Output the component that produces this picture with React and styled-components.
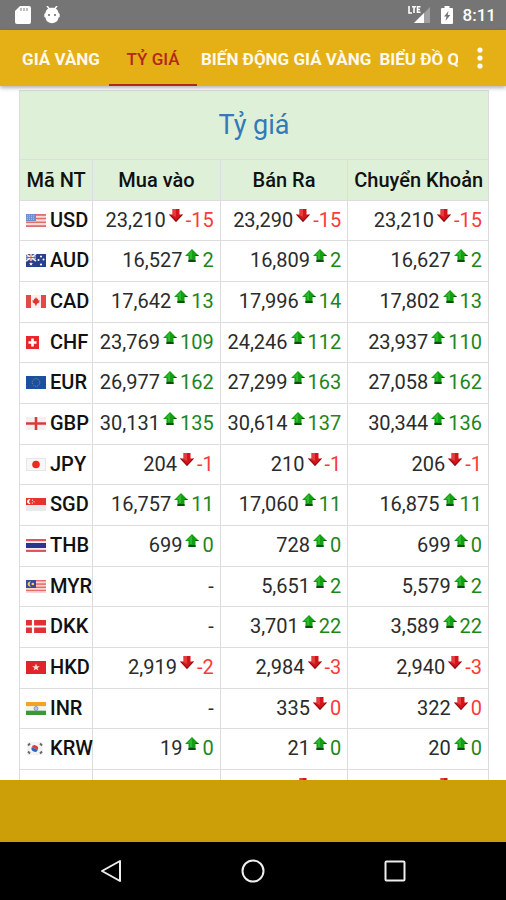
import React from 'react';
import styled, { createGlobalStyle } from 'styled-components';

const theme = {
  gold: '#e4b016',
  goldDark: '#cc9f08',
  status: '#757575',
  active: '#b3261a',
  header: '#dff0d8',
  border: '#dddddd',
  link: '#337ab7',
  up: '#1c861c',
  down: '#fb3a3a',
};

const GlobalStyle = createGlobalStyle`
  * {
    box-sizing: border-box;
  }

  body {
    margin: 0;
    background: #fff;
    color: #2b2b2b;
    font-family: Roboto, "Liberation Sans", sans-serif;
  }

  button {
    border: 0;
    padding: 0;
    background: none;
    color: inherit;
    font: inherit;
  }
`;

const Screen = styled.div`
  height: 100vh;
  display: flex;
  flex-direction: column;
`;

const StatusBar = styled.div`
  flex: none;
  height: 30px;
  padding: 0 10px 0 14px;
  display: flex;
  align-items: center;
  justify-content: space-between;
  background: ${theme.status};
  color: #fff;
  font-size: 17px;
  font-weight: 500;
`;

const StatusGroup = styled.div`
  display: flex;
  align-items: center;
  gap: ${(props) => props.$gap};

  svg {
    display: block;
  }
`;

const TopBar = styled.header`
  flex: none;
  height: 56px;
  position: relative;
  display: flex;
  background: ${theme.gold};
  box-shadow: 0 2px 4px rgba(0, 0, 0, 0.3);
`;

const Tabs = styled.nav`
  flex: 1;
  min-width: 0;
  padding-left: 17px;
  display: flex;
  gap: 4px;
  overflow: hidden;
`;

const Tab = styled.button`
  flex: none;
  min-width: 88px;
  padding-top: 4px;
  border-bottom: 2px solid ${(props) => (props.$active ? theme.active : 'transparent')};
  color: ${(props) => (props.$active ? theme.active : '#fff8ec')};
  font-size: 17px;
  font-weight: ${(props) => (props.$active ? 500 : 700)};
  white-space: nowrap;
`;

const MenuButton = styled.button`
  flex: none;
  width: 48px;
  padding-right: 4px;
  display: flex;
  align-items: center;
  justify-content: center;
  color: #fff;
`;

const Content = styled.main`
  flex: 1;
  min-height: 0;
  overflow-y: auto;
  scrollbar-width: none;
  padding: 4px 17px 0 19px;
`;

const Table = styled.table`
  width: 100%;
  table-layout: fixed;
  border-collapse: collapse;
  font-size: 20px;
  line-height: 24px;

  th,
  td {
    padding: 0 6px;
    border: 1px solid ${theme.border};
    white-space: nowrap;
  }

  tbody th,
  tbody td {
    padding-bottom: 2px;
  }

  tbody tr {
    height: 41px;
  }

  tbody tr:nth-child(3n + 1) {
    height: 40px;
  }
`;

const Column = styled.col`
  width: ${(props) => props.$width};
`;

const Title = styled.th`
  height: 69px;
  background: ${theme.header};
  color: ${theme.link};
  font-size: 27px;
  font-weight: 400;
`;

const Heading = styled.th`
  height: 41px;
  background: ${theme.header};
  color: #111;
  font-weight: 500;
`;

const Code = styled.th`
  color: #111;
  font-weight: 500;
  text-align: left;

  svg {
    margin-right: 4px;
  }
`;

const Rate = styled.td`
  text-align: right;

  svg {
    margin: 0 3px;
  }
`;

const Change = styled.span`
  color: ${(props) => (props.$down ? theme.down : theme.up)};
`;

const Banner = styled.div`
  flex: none;
  height: 62px;
  background: ${theme.goldDark};
`;

const NavBar = styled.nav`
  flex: none;
  height: 58px;
  padding: 0 40px;
  display: grid;
  grid-template-columns: repeat(3, 1fr);
  background: #000;

  button {
    display: flex;
    align-items: center;
    justify-content: center;
  }
`;

function Stripes({ colors }) {
  const h = 13 / colors.length;
  return colors.map((color, i) => <rect key={i} y={i * h} width="20" height={h + 0.1} fill={color} />);
}

const star = 'M0-3 .8-1 2.9-.9 1.2.4 1.8 2.4 0 1.2-1.8 2.4-1.2.4-2.9-.9-.8-1z';

const flags = {
  USD: (
    <>
      <Stripes colors={['#e0706c', '#f7dcdc', '#e0706c', '#f7dcdc', '#e0706c', '#f7dcdc', '#e0706c']} />
      <rect width="10" height="7" fill="#6d8fcb" />
      <path d="M1 1.8h8M1 3.6h8M1 5.4h8" stroke="#b9cbea" strokeWidth=".8" strokeDasharray="1 1" />
    </>
  ),
  AUD: (
    <>
      <rect width="20" height="13" fill="#27408b" />
      <path d="M0 0l10 7M10 0L0 7" stroke="#e8e4f0" strokeWidth="1.6" />
      <path d="M5 0v7M0 3.5h10" stroke="#fff" strokeWidth="2.2" />
      <path d="M5 0v7M0 3.5h10" stroke="#d84a55" strokeWidth="1" />
      <g fill="#fff">
        <path d={star} transform="translate(5 10) scale(.7)" />
        <circle cx="15" cy="2.5" r="1" />
        <circle cx="12.5" cy="6" r="1" />
        <circle cx="17.5" cy="5.5" r="1" />
        <circle cx="15" cy="10.5" r="1.1" />
      </g>
    </>
  ),
  CAD: (
    <>
      <rect width="20" height="13" fill="#fbeeee" />
      <path d="M0 0h5v13H0zM15 0h5v13h-5z" fill="#e34a45" />
      <path d="M10 2l1 2 1.2-.6-.3 2.2 1.7-.6-.5 1.6.7.5-2.8 1.7v.7h-.7V11h-.8V9.5h-.6v-.7L6.2 7.1l.7-.5-.5-1.6 1.7.6-.3-2.2L9 4z" fill="#e0332e" />
    </>
  ),
  CHF: (
    <>
      <rect width="13" height="13" fill="#e8262b" />
      <path d="M5.2 2.5h2.6v2.7h2.7v2.6H7.8v2.7H5.2V7.8H2.5V5.2h2.7z" fill="#fff" />
    </>
  ),
  EUR: (
    <>
      <rect width="20" height="13" fill="#1b4f9f" />
      <circle cx="10" cy="6.5" r="3.8" fill="none" stroke="#8f9a5c" strokeWidth="1" strokeDasharray="1 1" />
    </>
  ),
  GBP: (
    <>
      <rect width="20" height="13" fill="#f4f0f0" />
      <path d="M10 0v13M0 6.5h20" stroke="#d93a3a" strokeWidth="2.6" />
    </>
  ),
  JPY: (
    <>
      <rect x=".5" y=".5" width="19" height="12" fill="#f7f7f7" stroke="#e6e6e6" />
      <circle cx="10" cy="6.5" r="3.8" fill="#ee2a20" />
    </>
  ),
  SGD: (
    <>
      <rect width="20" height="13" fill="#e9e9e9" />
      <rect width="20" height="7" fill="#e5342f" />
      <path d="M4.5 1.2a2.5 2.5 0 1 0 0 4.6 2.6 2.6 0 0 1 0-4.6z" fill="#fff" />
      <path d="M6 2.2h1M7.5 3.8h1M5.8 5h1" stroke="#fff" />
    </>
  ),
  THB: (
    <>
      <rect width="20" height="13" fill="#e4545a" />
      <path d="M0 2.2h20v8.6H0z" fill="#f2f0f5" />
      <path d="M0 4h20v5H0z" fill="#2b3490" />
    </>
  ),
  MYR: (
    <>
      <Stripes colors={['#e66b6b', '#f6d5d5', '#e66b6b', '#f6d5d5', '#e66b6b', '#f6d5d5', '#e66b6b', '#f6d5d5']} />
      <rect width="10" height="8" fill="#3b4a98" />
      <path d="M5 1.5a2.6 2.6 0 1 0 0 5 3 3 0 0 1 0-5z" fill="#f3d84e" />
      <circle cx="6.8" cy="4" r="1.3" fill="#f3d84e" />
    </>
  ),
  DKK: (
    <>
      <rect width="20" height="13" fill="#e03236" />
      <path d="M7 0v13M0 6.5h20" stroke="#fff" strokeWidth="2.2" />
    </>
  ),
  HKD: (
    <>
      <rect width="20" height="13" fill="#e0242a" />
      <path d={star} transform="translate(10 6.5) scale(1.3)" fill="#fbd9d6" />
    </>
  ),
  INR: (
    <>
      <Stripes colors={['#f2a325', '#f4f4ee', '#3d9638']} />
      <circle cx="10" cy="6.5" r="2" fill="#b7c6e0" stroke="#6f8dc0" strokeWidth=".8" />
    </>
  ),
  KRW: (
    <>
      <rect x="1" width="16" height="13" fill="#f3f3f3" />
      <path d="M5.5 6.5a3.3 3.3 0 0 1 6.6 0z" fill="#e03a3e" transform="rotate(20 8.8 6.5)" />
      <path d="M5.5 6.5a3.3 3.3 0 0 0 6.6 0z" fill="#2f63b8" transform="rotate(20 8.8 6.5)" />
      <path d="M2 3.5l2-2M14 1.5l2 2M2 9.5l2 2M14 11.5l2-2" stroke="#666" strokeWidth="1.8" />
    </>
  ),
  KWD: (
    <>
      <Stripes colors={['#2f8a48', '#f4f4f4', '#d93a3a']} />
      <path d="M0 0l5 4v5l-5 4z" fill="#222" />
    </>
  ),
};

function Flag({ code }) {
  return (
    <svg width="20" height="13" viewBox="0 0 20 13" aria-hidden="true">
      {flags[code]}
    </svg>
  );
}

// the arrows sit in the upper part of their box, so they ride above the baseline
function Arrow({ down }) {
  return (
    <svg width="14" height="18" viewBox="0 0 14 18" aria-hidden="true">
      {down ? (
        <>
          <path d="M3.5 0h7v5.500H14L7 13 0 5.500h3.500z" fill="#d4141a" />
          <path d="M3.500 0H7v8L2 5.500h1.500z" fill="#ef4a50" opacity=".7" />
          <path d="M0 5.500L7 13l7-7.500-1.500.2L7 11.200 1.500 5.700z" fill="#8a0f14" />
        </>
      ) : (
        <>
          <path d="M7 0l7 7h-3.500v6h-7V7H0z" fill="#12a012" />
          <path d="M7 1.500L2.500 6H5v4h2z" fill="#3fca3f" opacity=".6" />
          <path d="M3.500 11h7v2h-7zM10.500 7H14l-1-1h-2.500z" fill="#0a4d0a" />
        </>
      )}
    </svg>
  );
}

const rows = [
  ['USD', ['23,210', -15], ['23,290', -15], ['23,210', -15]],
  ['AUD', ['16,527', 2], ['16,809', 2], ['16,627', 2]],
  ['CAD', ['17,642', 13], ['17,996', 14], ['17,802', 13]],
  ['CHF', ['23,769', 109], ['24,246', 112], ['23,937', 110]],
  ['EUR', ['26,977', 162], ['27,299', 163], ['27,058', 162]],
  ['GBP', ['30,131', 135], ['30,614', 137], ['30,344', 136]],
  ['JPY', ['204', -1], ['210', -1], ['206', -1]],
  ['SGD', ['16,757', 11], ['17,060', 11], ['16,875', 11]],
  ['THB', ['699', 0], ['728', 0], ['699', 0]],
  ['MYR', null, ['5,651', 2], ['5,579', 2]],
  ['DKK', null, ['3,701', 22], ['3,589', 22]],
  ['HKD', ['2,919', -2], ['2,984', -3], ['2,940', -3]],
  ['INR', null, ['335', 0, true], ['322', 0, true]],
  ['KRW', ['19', 0], ['21', 0], ['20', 0]],
  ['KWD', null, ['79,000', -50], ['76,000', -50]],
];

function RateCell({ rate }) {
  if (!rate) {
    return <Rate>-</Rate>;
  }
  const [value, change, fell] = rate;
  const down = fell || change < 0;
  return (
    <Rate>
      {value}
      <Arrow down={down} />
      <Change $down={down}>{change}</Change>
    </Rate>
  );
}

export default function App() {
  return (
    <Screen>
      <GlobalStyle />
      <StatusBar>
        <StatusGroup $gap="12px">
          <svg width="18" height="20" viewBox="0 0 18 20" aria-hidden="true">
            <path d="M6 1h9a2 2 0 0 1 2 2v14a2 2 0 0 1-2 2H3a2 2 0 0 1-2-2V6z" fill="#fff" />
            <path d="M7 3v3M10 3v3M13 3v3" stroke="#aaa" strokeWidth="1.5" />
          </svg>
          <svg width="16" height="18" viewBox="0 0 16 18" aria-hidden="true">
            <path d="M3 0l2.500 3M13 0l-2.500 3" stroke="#fff" strokeWidth="1.5" />
            <path d="M1.500 7C2 0 14 0 14.500 7l1.200 1v3l-1.200.5C14 19 2 19 1.500 11.500L.3 11V8z" fill="#fff" />
            <circle cx="5" cy="9" r="1" fill="#666" />
            <circle cx="11" cy="9" r="1" fill="#666" />
          </svg>
        </StatusGroup>
        <StatusGroup $gap="9px">
          <svg width="23" height="20" viewBox="0 0 23 20" aria-hidden="true">
            <path d="M22 2v16H6z" fill="#a0a0a0" />
            <path d="M16 8v10H6z" fill="#fff" />
            <path d="M1 1v7h3M4 1.700h4M6 1.700V8M12.500 1.700H9.500v5.600h3M9.500 4.500h2.500" fill="none" stroke="#fff" strokeWidth="1.6" />
          </svg>
          <svg width="14" height="20" viewBox="0 0 14 20" aria-hidden="true">
            <path d="M4.500 1h5v2H12a1 1 0 0 1 1 1v14a1 1 0 0 1-1 1H2a1 1 0 0 1-1-1V4a1 1 0 0 1 1-1h2.500z" fill="#fff" />
            <path d="M8.500 6L4 11.500h2.500L5.500 16l4.800-6H7.700z" fill="#757575" />
          </svg>
          <span>8:11</span>
        </StatusGroup>
      </StatusBar>
      <TopBar>
        <Tabs>
          <Tab type="button">GIÁ VÀNG</Tab>
          <Tab type="button" $active aria-current="page">TỶ GIÁ</Tab>
          <Tab type="button">BIẾN ĐỘNG GIÁ VÀNG</Tab>
          <Tab type="button">BIỂU ĐỒ Q</Tab>
        </Tabs>
        <MenuButton type="button" aria-label="Menu">
          <svg width="6" height="22" viewBox="0 0 6 22" fill="currentColor" aria-hidden="true">
            <circle cx="3" cy="3" r="2.6" />
            <circle cx="3" cy="11" r="2.6" />
            <circle cx="3" cy="19" r="2.6" />
          </svg>
        </MenuButton>
      </TopBar>
      <Content>
        <Table>
          <colgroup>
            <Column $width="15.6%" />
            <Column $width="27.2%" />
            <Column $width="27.2%" />
            <Column $width="30%" />
          </colgroup>
          <thead>
            <tr>
              <Title colSpan="4">Tỷ giá</Title>
            </tr>
            <tr>
              <Heading scope="col">Mã NT</Heading>
              <Heading scope="col">Mua vào</Heading>
              <Heading scope="col">Bán Ra</Heading>
              <Heading scope="col">Chuyển Khoản</Heading>
            </tr>
          </thead>
          <tbody>
            {rows.map(([code, ...rates]) => (
              <tr key={code}>
                <Code scope="row">
                  <Flag code={code} />
                  {code}
                </Code>
                {rates.map((rate, i) => (
                  <RateCell key={i} rate={rate} />
                ))}
              </tr>
            ))}
          </tbody>
        </Table>
      </Content>
      <Banner />
      <NavBar>
        <button type="button" aria-label="Back">
          <svg width="22" height="24" viewBox="0 0 22 24" fill="none" stroke="#eee" strokeWidth="2" aria-hidden="true">
            <path d="M20 2v20L2 12z" strokeLinejoin="round" />
          </svg>
        </button>
        <button type="button" aria-label="Home">
          <svg width="24" height="24" viewBox="0 0 24 24" fill="none" stroke="#eee" strokeWidth="2" aria-hidden="true">
            <circle cx="12" cy="12" r="10.5" />
          </svg>
        </button>
        <button type="button" aria-label="Recent apps">
          <svg width="22" height="22" viewBox="0 0 22 22" fill="none" stroke="#eee" strokeWidth="2" aria-hidden="true">
            <rect x="1.5" y="1.5" width="19" height="19" rx="1" />
          </svg>
        </button>
      </NavBar>
    </Screen>
  );
}
